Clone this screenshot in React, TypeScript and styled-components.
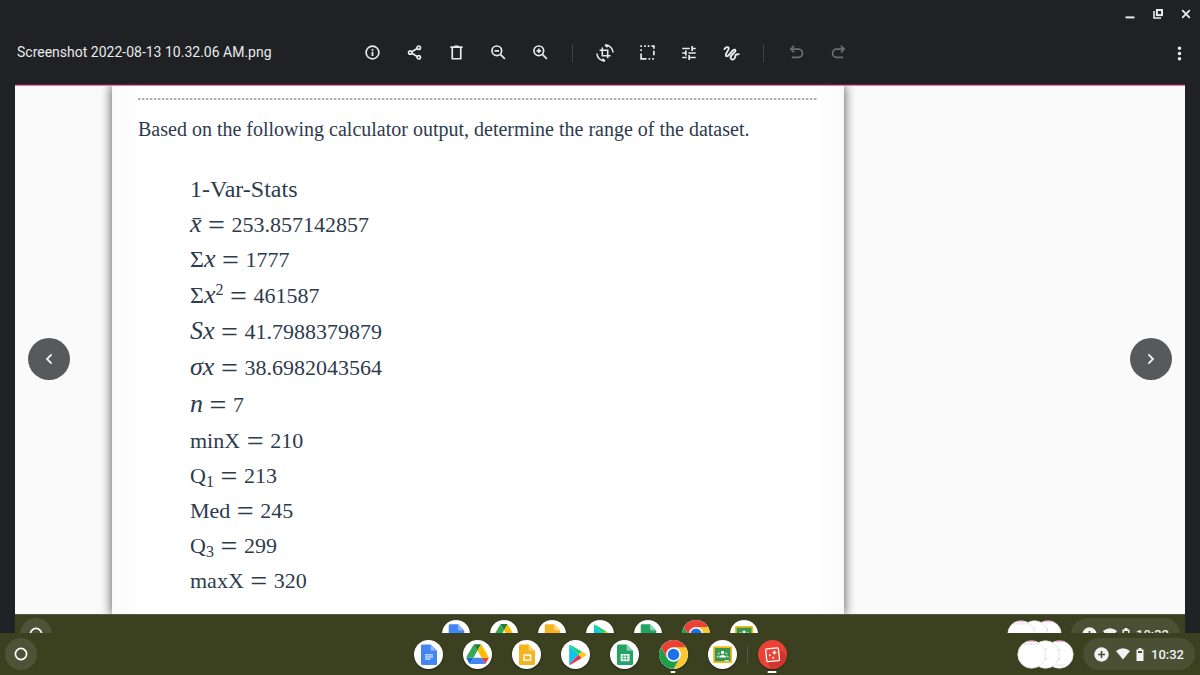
import React from 'react';
import styled, { createGlobalStyle } from 'styled-components';
import { MdMoreVert } from 'react-icons/md';

const GlobalStyle = createGlobalStyle`
  *, *::before, *::after { box-sizing: border-box; }
  body { margin: 0; background: #202124; }
`;

const Screen = styled.div`
  min-height: 100vh;
  display: flex;
  flex-direction: column;
  background: #202124;
  color: #e8eaed;
  font-family: Roboto, "Liberation Sans", sans-serif;
`;

const PlainButton = styled.button`
  display: flex;
  align-items: center;
  justify-content: center;
  padding: 0;
  border: 0;
  background: transparent;
  color: inherit;
  font: inherit;
`;

const WindowBar = styled.div`
  height: 28px;
  display: flex;
  justify-content: flex-end;
`;

const WindowButton = styled(PlainButton)`
  width: 28px;
  height: 28px;
`;

const Toolbar = styled.header`
  height: 50px;
  margin-bottom: 6px;
  padding: 0 7px 0 17px;
  display: grid;
  grid-template-columns: 1fr auto 1fr;
  align-items: center;
`;

const FileName = styled.h1`
  margin: 0;
  padding-bottom: 3px;
  font-size: 14px;
  line-height: 20px;
  font-weight: 400;
  white-space: nowrap;
`;

const Tools = styled.div`
  display: flex;
  align-items: center;
`;

const ToolButton = styled(PlainButton)`
  width: 42px;
  height: 32px;
  padding-bottom: 1px;
  &:disabled { color: #6b6d70; }
`;

const ToolDivider = styled.span`
  width: 1px;
  height: 18px;
  margin: 0 11px;
  background: #3f4144;
`;

const MoreButton = styled(PlainButton)`
  width: 28px;
  height: 32px;
  justify-self: end;
`;

const Viewer = styled.main`
  position: relative;
  flex: 1;
  display: flex;
  flex-direction: column;
  margin: 0 15px;
  border-top: 1px solid #6d1f3f;
  background: #fafafa;
`;

const Photo = styled.div`
  flex: 1;
  overflow: hidden;
  display: grid;
  grid-template-columns: 97fr 732fr 341fr;
  border-top: 1px solid #dd7fa0;
  background: #fafafa;
`;

const Paper = styled.article`
  grid-column: 2;
  padding: 12px 27px 0 26px;
  background: linear-gradient(to right, #fafafa, #fff 30px, #fff calc(100% - 30px), #fafafa);
  box-shadow: 0 0 10px 1px rgba(0, 0, 0, 0.6);
  color: #2d3b4e;
  font-family: "Liberation Serif", serif;
`;

const Rule = styled.hr`
  height: 2px;
  margin: 0;
  border: 0;
  background: repeating-linear-gradient(to right, #b0b0b0 0 2px, #dcdcdc 2px 3px, transparent 3px 4px);
`;

const Question = styled.p`
  margin: 17px 0 31px;
  font-size: 20px;
  line-height: 24px;
  white-space: nowrap;
`;

const StatList = styled.ul`
  margin: 0;
  padding: 0 0 0 52px;
  list-style: none;
`;

const StatRow = styled.li<{ $tall?: boolean }>`
  display: flex;
  align-items: baseline;
  gap: 6px;
  height: ${(p) => (p.$tall ? 37 : 35)}px;
  font-size: 22px;
  line-height: ${(p) => (p.$tall ? 37 : 35)}px;
`;

const StatHeading = styled.span`
  font-size: 24px;
`;

const Symbol = styled.span`
  sub, sup { font-size: 16px; line-height: 0; }
  sub { vertical-align: -4px; }
  sup { vertical-align: 8px; }
`;

const Sigma = styled.span`
  font-size: 24px;
  line-height: 0;
`;

const Variable = styled.i`
  font-size: 26px;
  line-height: 0;
`;

const Equals = styled.span`
  align-self: center;
  width: 18px;
  font-size: 30px;
  text-align: center;
`;

const NavButton = styled(PlainButton)<{ $side: 'left' | 'right' }>`
  position: absolute;
  top: calc(50% - 21px);
  ${(p) => p.$side}: 13px;
  width: 42px;
  height: 42px;
  border-radius: 50%;
  background: #58595b;
  color: #f1f3f4;
`;

const ShelfFrame = styled.div<{ $preview?: boolean }>`
  height: ${(p) => (p.$preview ? 19 : 42)}px;
  overflow: hidden;
  background: #3b4020;
  box-shadow: ${(p) => (p.$preview ? 'inset 0 1px #55593f' : 'none')};
`;

const ShelfRow = styled.div<{ $preview?: boolean }>`
  height: ${(p) => (p.$preview ? 40 : 42)}px;
  padding: 0 5px;
  display: grid;
  grid-template-columns: 1fr auto 1fr;
  align-items: center;
`;

const Launcher = styled(PlainButton)`
  width: 32px;
  height: 32px;
  border-radius: 50%;
  background: #4e5337;
`;

const Apps = styled.nav`
  display: flex;
  align-items: center;
`;

const AppButton = styled(PlainButton)<{ $size: number; $fill?: string }>`
  position: relative;
  width: ${(p) => p.$size}px;
  height: ${(p) => p.$size}px;
  margin: 0 10px;
  border-radius: 50%;
  background: ${(p) => p.$fill || '#fff'};
  box-shadow: 0 1px 2px rgba(0, 0, 0, 0.4);
  svg { width: 100%; height: 100%; display: block; border-radius: 50%; }
`;

const Running = styled.span<{ $active?: boolean }>`
  position: absolute;
  top: calc(100% + 2px);
  left: 50%;
  width: ${(p) => (p.$active ? 9 : 5)}px;
  height: 2px;
  transform: translateX(-50%);
  border-radius: 1px;
  background: #fff;
`;

const AppDivider = styled.span`
  width: 1px;
  height: 18px;
  background: #55593f;
`;

const Tray = styled.div`
  display: flex;
  align-items: center;
  justify-content: flex-end;
  gap: 9px;
`;

const Recents = styled(PlainButton)<{ $preview?: boolean }>`
  width: ${(p) => (p.$preview ? 55 : 57)}px;
  svg { display: block; width: 100%; height: auto; }
`;

const Status = styled(PlainButton)<{ $preview?: boolean }>`
  width: ${(p) => (p.$preview ? 109 : 112)}px;
  height: 32px;
  padding: 0 11px;
  justify-content: space-between;
  border-radius: 16px;
  background: #4b5034;
  color: #f1f3f4;
  font-size: 13px;
  font-weight: 500;
`;

const Glyph = ({ size = 18, weight = 2.4, children }: { size?: number; weight?: number; children: React.ReactNode }) => (
  <svg width={size} height={size} viewBox="0 0 24 24" fill="none" stroke="currentColor" strokeWidth={weight} aria-hidden="true">
    {children}
  </svg>
);

const Page = ({ fill, fold, children }: { fill: string; fold: string; children: React.ReactNode }) => (
  <svg viewBox="0 0 29 29" aria-hidden="true">
    <path d="M8.4 4.4H16.6L23 10.8V23.5Q23 25 21.5 25H8.4Q7 25 7 23.5V5.9Q7 4.4 8.4 4.4Z" fill={fill} />
    <path d="M16.6 4.4L23 10.8H18Q16.6 10.8 16.6 9.4Z" fill={fold} />
    {children}
  </svg>
);

const DocsIcon = () => (
  <Page fill="#4285f4" fold="#90b5f8">
    <path d="M11 14.9h8M11 17h8M11 19.1h5.6" stroke="#fff" strokeWidth="1" />
  </Page>
);

const SlidesIcon = () => (
  <Page fill="#f4b420" fold="#f9d57c">
    <rect x="12" y="15" width="6.6" height="5.2" fill="none" stroke="#fff" strokeWidth="1.4" />
  </Page>
);

const SheetsIcon = () => (
  <Page fill="#23a466" fold="#8ed1b1">
    <rect x="10.7" y="14" width="8.8" height="7.2" fill="#fff" />
    <path d="M11.5 16.2h7.2M11.5 18.8h7.2M13.7 14.8v5.6M16.5 14.8v5.6" stroke="#23a466" strokeWidth=".7" />
  </Page>
);

const DriveIcon = () => (
  <svg viewBox="0 0 29 29" aria-hidden="true">
    <g transform="translate(3.4 4.2) scale(.255)">
      <path d="m6.6 66.85 3.85 6.65c.8 1.4 1.95 2.5 3.3 3.3l13.75-23.8h-27.5c0 1.55.4 3.1 1.2 4.5z" fill="#1967d2" />
      <path d="m43.65 25-13.75-23.8c-1.35.8-2.5 1.9-3.3 3.3l-25.4 44a9.06 9.06 0 0 0-1.2 4.5h27.5z" fill="#34a853" />
      <path d="m73.55 76.8c1.35-.8 2.5-1.9 3.3-3.3l1.6-2.75 7.65-13.25c.8-1.4 1.2-2.95 1.2-4.5h-27.5l5.85 11.5z" fill="#ea4335" />
      <path d="m43.65 25 13.75-23.8c-1.35-.8-2.9-1.2-4.5-1.2h-18.5c-1.6 0-3.15.45-4.5 1.2z" fill="#188038" />
      <path d="m59.8 53h-32.3l-13.75 23.8c1.35.8 2.9 1.2 4.5 1.2h50.8c1.6 0 3.15-.45 4.5-1.2z" fill="#4285f4" />
      <path d="m73.4 26.5-12.7-22c-.8-1.4-1.95-2.5-3.3-3.3l-13.75 23.8 16.15 28h27.45c0-1.55-.4-3.1-1.2-4.5z" fill="#fbbc04" />
    </g>
  </svg>
);

const PlayIcon = () => (
  <svg viewBox="0 0 29 29" aria-hidden="true">
    <path d="M8.2 5.2V24.4L17.6 14.8Z" fill="#12c4e8" />
    <path d="M8.2 5.2Q9 4.6 10 5.2L20.8 11.6L17.6 14.8Z" fill="#16d47a" />
    <path d="M8.2 24.4Q9 25 10 24.4L20.8 18L17.6 14.8Z" fill="#eb3050" />
    <path d="M20.8 11.6L25 14Q25.8 14.8 25 15.6L20.8 18L17.6 14.8Z" fill="#ffc918" />
  </svg>
);

const ChromeIcon = () => (
  <svg viewBox="0 0 29 29" aria-hidden="true">
    <path d="M14.5 14.5L1.9 7.2A14.5 14.5 0 0 1 27.1 7.2Z" fill="#ea4335" />
    <path d="M14.5 7.2H27.1A14.5 14.5 0 0 1 14.5 29L20.8 18.1Z" fill="#fcc934" />
    <path d="M1.9 7.2A14.5 14.5 0 0 0 14.5 29L20.8 18.1L14.5 14.5L8.2 18.1Z" fill="#1e9e4b" />
    <path d="M14.5 7.2H27.1L1.9 7.2L8.2 18.1Z" fill="#ea4335" />
    <circle cx="14.5" cy="14.5" r="7.3" fill="#fff" />
    <circle cx="14.5" cy="14.5" r="5.8" fill="#1a73e8" />
  </svg>
);

const ClassroomIcon = () => (
  <svg viewBox="0 0 29 29" aria-hidden="true">
    <rect x="5.2" y="6.3" width="18.8" height="16.6" rx="1.2" fill="#f5ba16" />
    <rect x="6.9" y="8" width="15.4" height="13.2" fill="#35974f" />
    <g fill="#fff">
      <circle cx="14.6" cy="12.4" r="1.6" />
      <path d="M11.2 17.4v-.8q1.2-1.6 3.4-1.6t3.4 1.6v.8z" />
      <g fillOpacity=".6">
        <circle cx="10.8" cy="13.4" r="1" />
        <circle cx="18.4" cy="13.4" r="1" />
        <path d="M8.4 17.4v-.7q.9-1.2 2.6-1.1l-.8 1.8zM20.8 17.4v-.7q-.9-1.2-2.6-1.1l.8 1.8z" />
      </g>
      <path d="M16.4 20.2h4.4v1h-4.4z" />
    </g>
  </svg>
);

const GalleryIcon = () => (
  <svg viewBox="0 0 29 29" aria-hidden="true">
    <path d="M21 8L28 15V22L20 29H14L8 21Z" fill="#cf372c" />
    <g transform="rotate(-6 14.5 14.7)">
      <rect x="8.2" y="8.4" width="12.8" height="12.8" rx="1.2" fill="#ea4335" stroke="#fff" strokeWidth="1.3" />
      <path d="M16.6 10.6l.7 1.5 1.5.7-1.5.7-.7 1.5-.7-1.5-1.5-.7 1.5-.7z" fill="#fff" stroke="#fff" strokeWidth=".4" />
      <circle cx="11.8" cy="15" r="1" fill="#fff" />
      <circle cx="14.9" cy="17.8" r="1" fill="#fff" />
    </g>
  </svg>
);

const RecentsArt = () => (
  <svg viewBox="0 0 57 29" aria-hidden="true">
    <g fill="#fff" stroke="#dcdcd8" strokeWidth=".7">
      <circle cx="42.4" cy="14.5" r="13.8" />
      <circle cx="28.5" cy="14.5" r="13.8" />
      <circle cx="14.6" cy="14.5" r="13.8" />
    </g>
    <path d="M11 .9h7M39 .9h7" stroke="#cf6288" strokeWidth="1" />
    <path d="M7 4h15M29 8v2M29 18v2M42 9v2M42 18v2M40 25h9" stroke="#b6bbc2" strokeWidth=".6" strokeDasharray="2 1" />
  </svg>
);

const apps = [
  { name: 'Docs', Icon: DocsIcon },
  { name: 'Drive', Icon: DriveIcon },
  { name: 'Slides', Icon: SlidesIcon },
  { name: 'Play Store', Icon: PlayIcon },
  { name: 'Sheets', Icon: SheetsIcon },
  { name: 'Chrome', Icon: ChromeIcon, running: true },
  { name: 'Classroom', Icon: ClassroomIcon },
];

const Shelf = ({ preview }: { preview?: boolean }) => (
  <ShelfFrame $preview={preview}>
    <ShelfRow $preview={preview}>
      <Launcher aria-label="Launcher">
        <svg width="14" height="14" viewBox="0 0 14 14" aria-hidden="true">
          <circle cx="7" cy="7" r="5.6" fill="none" stroke="#fff" strokeWidth="1.7" />
        </svg>
      </Launcher>
      <Apps aria-label="Shelf">
        {apps.map(({ name, Icon, running }) => (
          <AppButton key={name} aria-label={name} $size={preview ? 28 : 29}>
            <Icon />
            {running && !preview && <Running />}
          </AppButton>
        ))}
        {!preview && (
          <>
            <AppDivider />
            <AppButton aria-label="Gallery" $size={29} $fill="#ea4335">
              <GalleryIcon />
              <Running $active />
            </AppButton>
          </>
        )}
      </Apps>
      <Tray>
        <Recents aria-label="Recent screenshots" $preview={preview}><RecentsArt /></Recents>
        <Status $preview={preview}>
          <svg width="15" height="15" viewBox="0 0 15 15" aria-hidden="true">
            <circle cx="7.5" cy="7.5" r="7.2" fill="currentColor" />
            <path d="M7.5 4v7M4 7.5h7" stroke="#4b5034" strokeWidth="1.6" />
          </svg>
          <svg width="14" height="12" viewBox="0 0 14 12" aria-hidden="true">
            <path d="M0 3Q7-2.6 14 3L7 11.6Z" fill="currentColor" />
          </svg>
          <svg width="8" height="13" viewBox="0 0 8 13" aria-hidden="true">
            <path d="M2.5 0h3v1.4H7.5V13H.5V1.4H2.5Z" fill="currentColor" />
            <path d="M2 3h4v2H2z" fill="#4b5034" />
          </svg>
          10:32
        </Status>
      </Tray>
    </ShelfRow>
  </ShelfFrame>
);

type Stat = { key: string; symbol: React.ReactNode; value: string; tall?: boolean };

const stats: Stat[] = [
  { key: 'mean', symbol: <Variable>x̄</Variable>, value: '253.857142857' },
  { key: 'sum', symbol: <><Sigma>Σ</Sigma><Variable>x</Variable></>, value: '1777' },
  { key: 'sumsq', symbol: <><Sigma>Σ</Sigma><Variable>x</Variable><sup>2</sup></>, value: '461587', tall: true },
  { key: 's', symbol: <Variable>Sx</Variable>, value: '41.7988379879' },
  { key: 'sigma', symbol: <Variable>σx</Variable>, value: '38.6982043564', tall: true },
  { key: 'n', symbol: <Variable>n</Variable>, value: '7', tall: true },
  { key: 'min', symbol: 'minX', value: '210' },
  { key: 'q1', symbol: <>Q<sub>1</sub></>, value: '213' },
  { key: 'med', symbol: 'Med', value: '245' },
  { key: 'q3', symbol: <>Q<sub>3</sub></>, value: '299' },
  { key: 'max', symbol: 'maxX', value: '320' },
];

export default function App() {
  return (
    <Screen>
      <GlobalStyle />
      <WindowBar>
        <WindowButton aria-label="Minimize">
          <svg width="10" height="10" viewBox="0 0 10 10" aria-hidden="true"><path d="M.5 8.4h9" stroke="currentColor" strokeWidth="2" /></svg>
        </WindowButton>
        <WindowButton aria-label="Restore">
          <svg width="10" height="10" viewBox="0 0 10 10" fill="none" stroke="currentColor" aria-hidden="true">
            <rect x="3.9" y="1" width="5.1" height="5.1" strokeWidth="2" />
            <path d="M1 2V9H8" strokeWidth="1.6" />
          </svg>
        </WindowButton>
        <WindowButton aria-label="Close">
          <svg width="10" height="10" viewBox="0 0 10 10" aria-hidden="true"><path d="M1.2 1.2l7.6 7.6M8.8 1.2L1.2 8.8" stroke="currentColor" strokeWidth="1.8" /></svg>
        </WindowButton>
      </WindowBar>
      <Toolbar>
        <FileName>Screenshot 2022-08-13 10.32.06 AM.png</FileName>
        <Tools>
          <ToolButton aria-label="Info">
            <Glyph size={17}><circle cx="12" cy="12" r="9" /><path d="M12 11V17M12 7V9.4" strokeWidth="2.6" /></Glyph>
          </ToolButton>
          <ToolButton aria-label="Share">
            <Glyph size={17}>
              <circle cx="18" cy="5.2" r="2.4" />
              <circle cx="6" cy="12" r="2.4" />
              <circle cx="18" cy="18.8" r="2.4" />
              <path d="M8.2 10.8L15.8 6.4M8.2 13.2L15.8 17.6" />
            </Glyph>
          </ToolButton>
          <ToolButton aria-label="Delete"><Glyph size={17}><path d="M6 5V20.8H18V5M3.4 4.4H20.6M9 3.2H15" /></Glyph></ToolButton>
          <ToolButton aria-label="Zoom out"><Glyph size={17}><circle cx="9.6" cy="9.6" r="6.8" /><path d="M14.6 14.6L21 21M6.4 9.6h6.4" /></Glyph></ToolButton>
          <ToolButton aria-label="Zoom in"><Glyph size={17}><circle cx="9.6" cy="9.6" r="6.8" /><path d="M14.6 14.6L21 21M6.4 9.6h6.4M9.6 6.4v6.4" /></Glyph></ToolButton>
          <ToolDivider />
          <ToolButton aria-label="Crop and rotate">
            <Glyph size={18} weight={2.1}>
              <path d="M8.4 4.6V15.6H19.4M4.8 8.4H15.6V19" />
              <path d="M12.4 1.2A10.8 10.8 0 0 1 22.8 11.4M12 1.2L15.4 4.4M11.6 22.8A10.8 10.8 0 0 1 1.2 12.6M12 22.8L8.6 19.6" />
            </Glyph>
          </ToolButton>
          <ToolButton aria-label="Rescale">
            <Glyph size={17}>
              <path d="M3 4.2V1.8M2 3h2.2M7.4 3h2.4M12.4 3h2.4M17.6 3H21V6.6M3 7.4v2.4M3 13.4V21H10.6M13.4 21h2.4M18.6 21h2.4M21 9.4V16" />
            </Glyph>
          </ToolButton>
          <ToolButton aria-label="Lighting filters">
            <Glyph size={18} weight={2.3}>
              <path d="M3 6H13M16.2 6H21M16.2 2.8V9.2M3 12H8M11.2 12H21M7.8 8.8V15.2M3 18H9M12.2 18H21M12.2 14.8V21.2" />
            </Glyph>
          </ToolButton>
          <ToolButton aria-label="Annotate">
            <Glyph size={18} weight={2.5}>
              <path
                d="M3.2 6.8C5 4.2 8.8 2.8 9 5.8C9.2 8.8 4.4 11.8 5.2 15.2C6.2 18.4 10 14.2 12.2 11.2C14.4 8.2 17.4 6 18 8.8C18.4 11 11 14.4 11.4 18.4C12 22.4 17.2 21 17.6 16.8C17.8 14.2 19 13.4 22.2 13.6"
                strokeLinecap="round"
              />
            </Glyph>
          </ToolButton>
          <ToolDivider />
          <ToolButton aria-label="Undo" disabled><Glyph size={17}><path d="M8.6 2.6L4 7.2L8.6 11.8M4 7.2H14.6a5.4 5.4 0 0 1 0 11.6H5.4" /></Glyph></ToolButton>
          <ToolButton aria-label="Redo" disabled><Glyph size={17}><path d="M15.4 2.6L20 7.2L15.4 11.8M20 7.2H9.4a5.4 5.4 0 0 0 0 11.6H18.6" /></Glyph></ToolButton>
        </Tools>
        <MoreButton aria-label="More options"><MdMoreVert size={21} /></MoreButton>
      </Toolbar>
      <Viewer>
        <Photo>
          <Paper>
            <Rule />
            <Question>Based on the following calculator output, determine the range of the dataset.</Question>
            <StatList>
              <StatRow><StatHeading>1-Var-Stats</StatHeading></StatRow>
              {stats.map((s) => (
                <StatRow key={s.key} $tall={s.tall}>
                  <Symbol>{s.symbol}</Symbol>
                  <Equals>=</Equals>
                  <span>{s.value}</span>
                </StatRow>
              ))}
            </StatList>
          </Paper>
        </Photo>
        <Shelf preview />
        <NavButton $side="left" aria-label="Previous image">
          <svg width="10" height="14" viewBox="0 0 10 14" fill="none" stroke="currentColor" strokeWidth="1.8" aria-hidden="true"><path d="M7.6 2.4L3 7L7.6 11.6" /></svg>
        </NavButton>
        <NavButton $side="right" aria-label="Next image">
          <svg width="10" height="14" viewBox="0 0 10 14" fill="none" stroke="currentColor" strokeWidth="1.8" aria-hidden="true"><path d="M2.4 2.4L7 7L2.4 11.6" /></svg>
        </NavButton>
      </Viewer>
      <Shelf />
    </Screen>
  );
}
